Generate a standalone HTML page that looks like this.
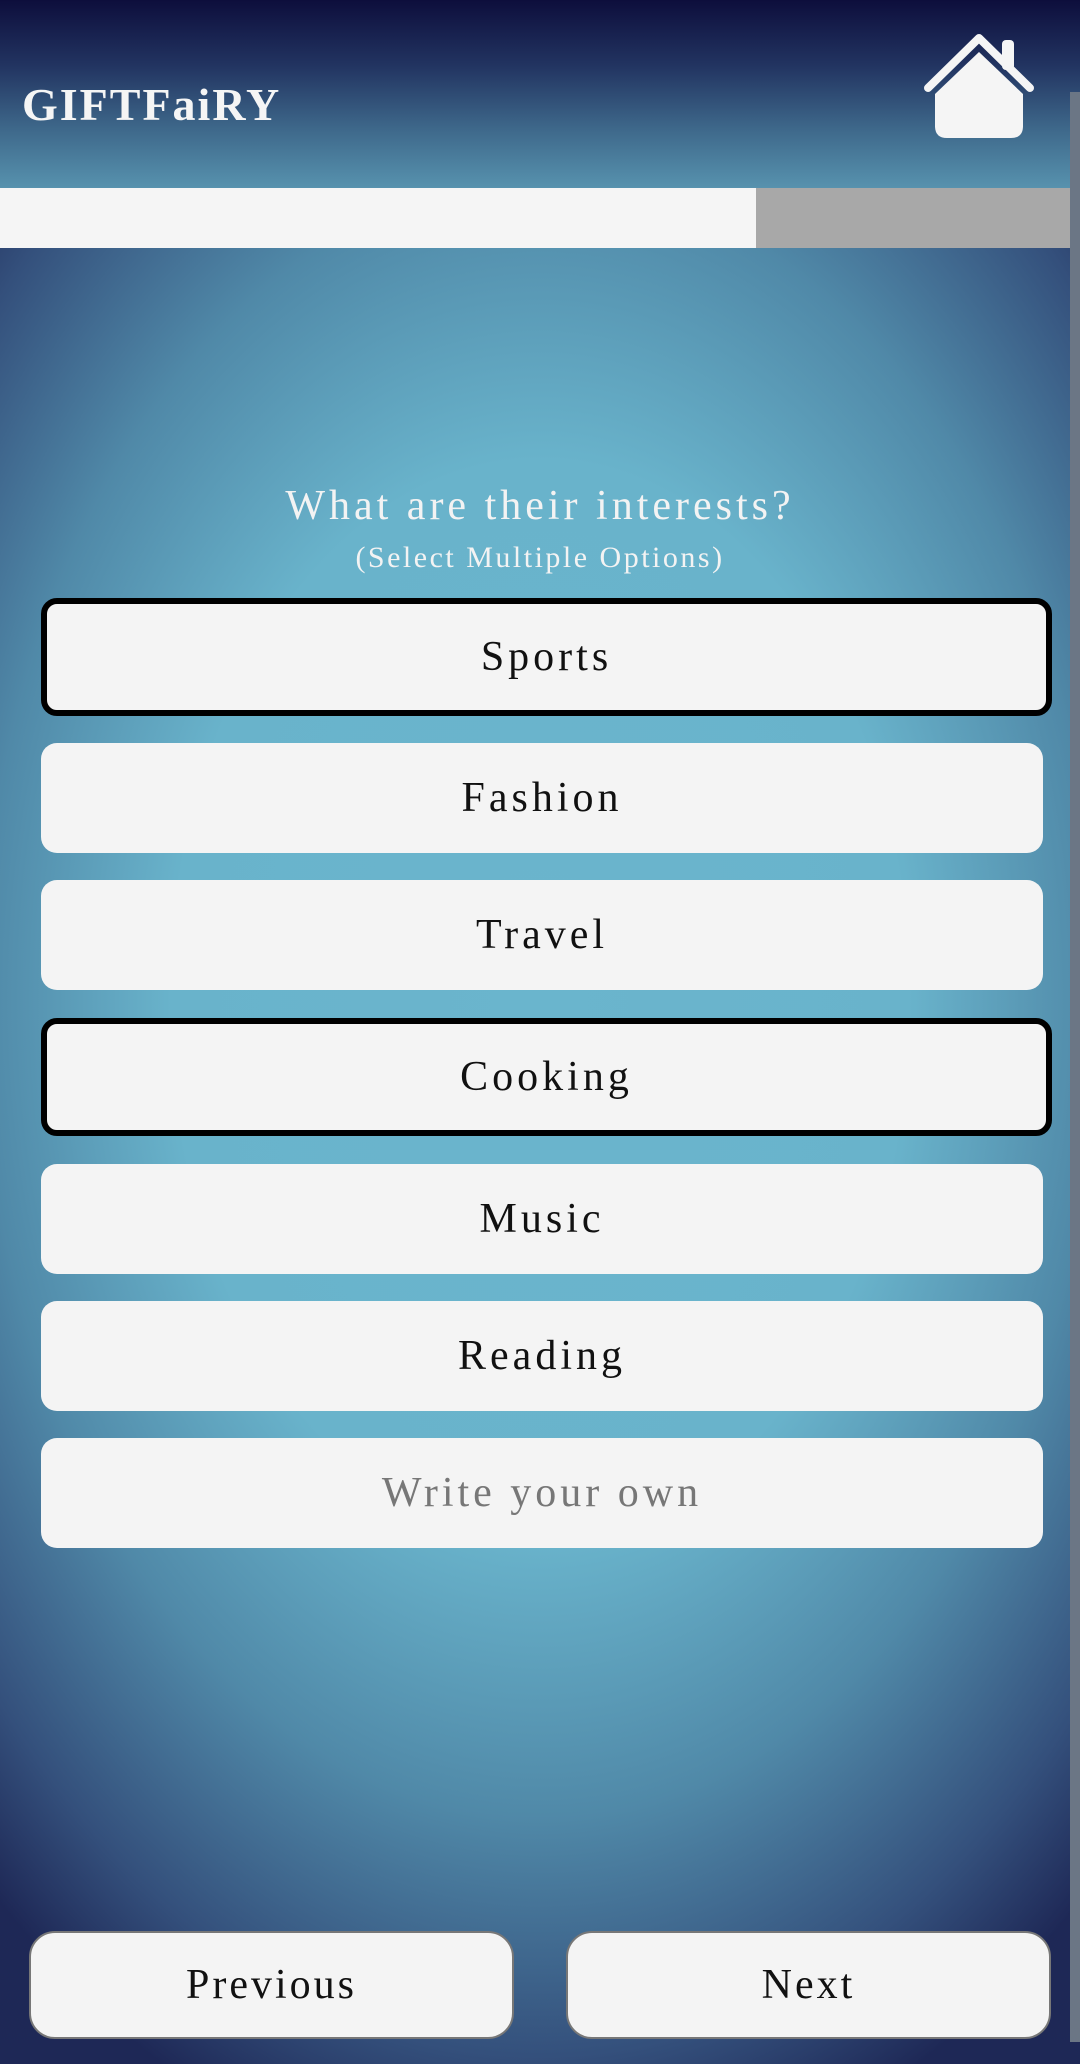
<!DOCTYPE html>
<html><head><meta charset="utf-8"><style>
html,body{margin:0;padding:0;}
body{width:1080px;height:2064px;position:relative;overflow:hidden;font-family:"Liberation Serif",serif;
background:radial-gradient(ellipse 820px 1200px at 540px 1000px,#6ab5cd 0%,#69b3cb 45%,#5089a8 68%,#34507c 88%,#1e2856 100%);}
.hdr{position:absolute;left:0;top:0;width:1080px;height:188px;background:linear-gradient(#0d0e3c 0%,#223461 35%,#3f6a8c 70%,#5792ae 100%);}
.title{position:absolute;left:22px;top:78px;font-size:46px;font-weight:bold;color:#f5f5f5;letter-spacing:2px;}
.bar{position:absolute;left:0;top:188px;width:1070px;height:60px;background:#a8a8a8;}
.bar div{width:756px;height:60px;background:#f5f5f5;}
.scroll{position:absolute;left:1070px;top:92px;width:10px;height:1950px;background:#6b7685;}
.q{position:absolute;left:0;width:1080px;text-align:center;color:#f3f3f3;}
.opt{position:absolute;left:41px;width:1002px;height:110px;background:#f4f4f4;border-radius:16px;text-align:center;line-height:110px;font-size:42px;letter-spacing:4px;color:#111;box-sizing:border-box;}
.sel{border:6px solid #000;width:1011px;height:118px;line-height:106px;}
.btn{position:absolute;top:1931px;height:108px;width:485px;background:#f4f4f4;border:2px solid #777;border-radius:26px;box-sizing:border-box;text-align:center;line-height:104px;font-size:42px;letter-spacing:3px;color:#111;}
</style></head><body>
<div class="hdr"></div>
<div class="title">GIFTFaiRY</div>
<svg style="position:absolute;left:920px;top:32px" width="118" height="108" viewBox="0 0 118 108">
<path d="M8 56 L59 6 L110 56" fill="none" stroke="#f5f5f5" stroke-width="8" stroke-linecap="round" stroke-linejoin="round"/>
<rect x="82" y="8" width="12" height="30" rx="4" fill="#f5f5f5"/>
<path d="M15 62 L59 20 L103 62 L103 94 Q103 106 91 106 L27 106 Q15 106 15 94 Z" fill="#f5f5f5"/>
</svg>
<div class="bar"><div></div></div>
<div class="scroll"></div>
<div class="q" style="top:482px;font-size:42px;letter-spacing:4px;">What are their interests?</div>
<div class="q" style="top:541px;font-size:30px;letter-spacing:2.5px;">(Select Multiple Options)</div>
<div class="opt sel" style="top:598px">Sports</div>
<div class="opt" style="top:743px">Fashion</div>
<div class="opt" style="top:880px">Travel</div>
<div class="opt sel" style="top:1018px">Cooking</div>
<div class="opt" style="top:1164px">Music</div>
<div class="opt" style="top:1301px">Reading</div>
<div class="opt" style="top:1438px;color:#777">Write your own</div>
<div class="btn" style="left:29px">Previous</div>
<div class="btn" style="left:566px">Next</div>
</body></html>
